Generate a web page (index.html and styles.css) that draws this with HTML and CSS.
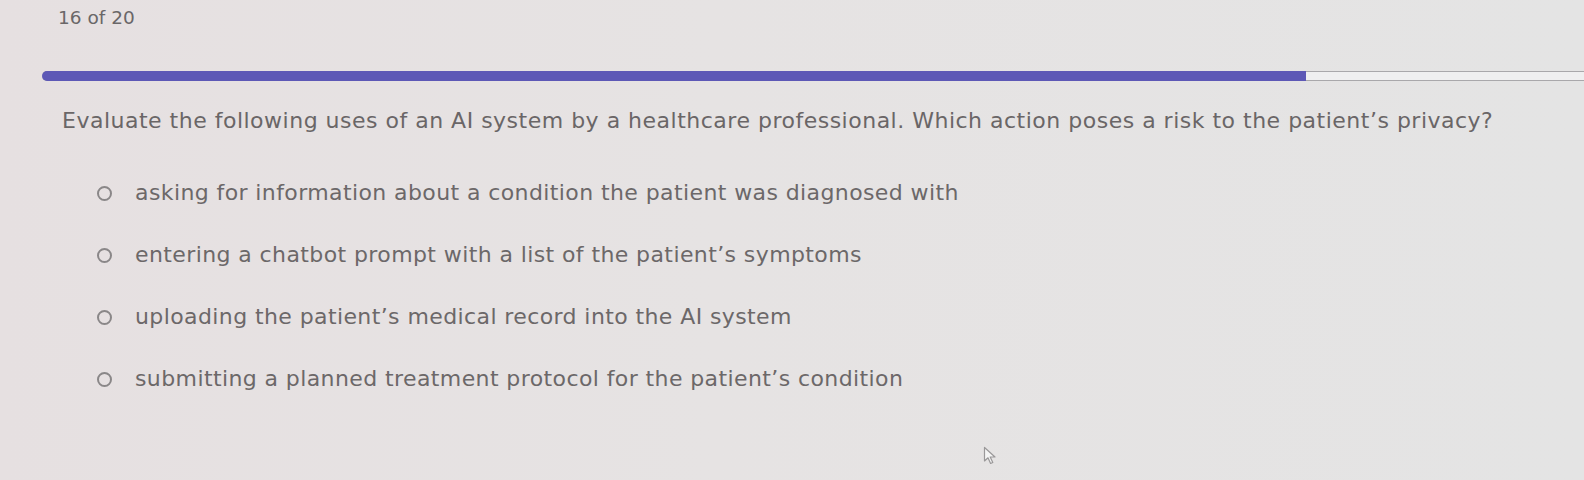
FILE: index.html
```html
<!DOCTYPE html>
<html lang="en">
<head>
<meta charset="utf-8">
<title>Quiz</title>
<link rel="stylesheet" href="styles.css">
</head>
<body>
<main class="quiz">
  <div class="counter">16 of 20</div>
  <div class="progress"><div class="progress-fill" style="width:82%"></div></div>
  <h1 class="question">Evaluate the following uses of an AI system by a healthcare professional. Which action poses a risk to the patient’s privacy?</h1>
  <ul class="options">
    <li class="option"><span class="radio"></span><span class="label">asking for information about a condition the patient was diagnosed with</span></li>
    <li class="option"><span class="radio"></span><span class="label">entering a chatbot prompt with a list of the patient’s symptoms</span></li>
    <li class="option"><span class="radio"></span><span class="label">uploading the patient’s medical record into the AI system</span></li>
    <li class="option"><span class="radio"></span><span class="label">submitting a planned treatment protocol for the patient’s condition</span></li>
  </ul>
</main>
<svg class="cursor" width="16" height="20" viewBox="0 0 16 20" aria-hidden="true">
  <path d="M1.5 1.5 L1.5 15 L5 11.8 L7.6 17.5 L9.8 16.5 L7.2 11 L12 11 Z" fill="#f4f4f4" stroke="#9a9899" stroke-width="1.2" stroke-linejoin="round"/>
</svg>
</body>
</html>
```

FILE: styles.css
```css
html, body {
  margin: 0;
  padding: 0;
  height: 100%;
}
body {
  background: linear-gradient(90deg, #e6e0e1 0%, #e6e3e3 45%, #e4e4e4 100%);
  font-family: "DejaVu Sans", "Liberation Sans", sans-serif;
  color: #6c6869;
  overflow: hidden;
  position: relative;
}
.quiz {
  display: flex;
  flex-direction: column;
  padding: 6px 0 0 0;
}
.counter {
  margin-left: 58px;
  font-size: 18.5px;
  line-height: 24px;
  color: #6a6768;
}
.progress {
  margin: 41px 0 0 42px;
  height: 8px;
  border-top: 1px solid #a9a8ab;
  border-bottom: 1px solid #a9a8ab;
  background: #efeff0;
  border-radius: 5px 0 0 5px;
}
.progress-fill {
  height: 10px;
  margin-top: -1px;
  background: #5d58b6;
  border-radius: 5px 0 0 5px;
}
.question {
  margin: 25px 0 0 62px;
  font-size: 22px;
  font-weight: 400;
  line-height: 30px;
  letter-spacing: 0.5px;
  color: #6a6667;
}
.options {
  list-style: none;
  margin: 42px 0 0 97px;
  padding: 0;
  display: flex;
  flex-direction: column;
  gap: 32px;
}
.option {
  display: flex;
  align-items: center;
  gap: 23px;
  height: 30px;
}
.radio {
  width: 11px;
  height: 11px;
  border: 2px solid #8a8788;
  border-radius: 50%;
  flex: none;
}
.label {
  font-size: 22px;
  line-height: 30px;
  letter-spacing: 0.4px;
  color: #6c6869;
}
.cursor {
  position: absolute;
  left: 983px;
  top: 446px;
}
```
